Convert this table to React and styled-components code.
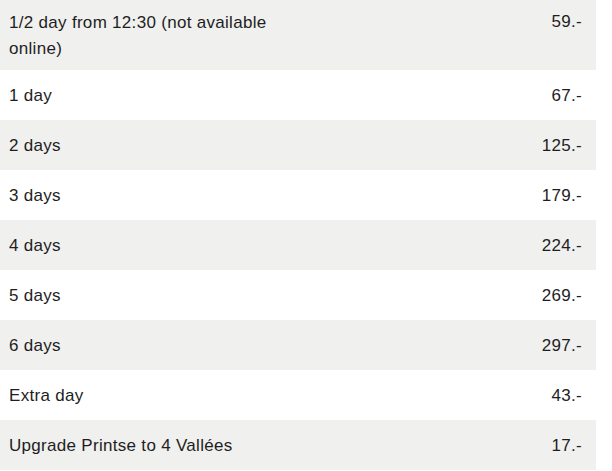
import React from "react";
import styled, { createGlobalStyle } from "styled-components";

const GlobalStyle = createGlobalStyle`
  body {
    margin: 0;
    background: #ffffff;
    font-family: "Liberation Sans", Arial, sans-serif;
    color: #1e1e1e;
  }
`;

const Table = styled.table`
  width: 596px;
  border-collapse: collapse;
  font-size: 17px;
  line-height: 26px;
  letter-spacing: 0.3px;
`;

const Row = styled.tr`
  background: ${(p) => (p.$shaded ? "#f0f0ef" : "#ffffff")};
`;

const Label = styled.td`
  width: 50%;
  height: 50px;
  padding: 10px 0 8px 9px;
  text-align: left;
  vertical-align: middle;
  box-sizing: border-box;
`;

const Price = styled.td`
  height: 50px;
  padding: 9px 14px 9px 0;
  text-align: right;
  vertical-align: top;
  box-sizing: border-box;
  padding-top: ${(p) => (p.$tall ? "9px" : "13px")};
`;

const prices = [
  { label: "1/2 day from 12:30 (not available online)", price: "59.-" },
  { label: "1 day", price: "67.-" },
  { label: "2 days", price: "125.-" },
  { label: "3 days", price: "179.-" },
  { label: "4 days", price: "224.-" },
  { label: "5 days", price: "269.-" },
  { label: "6 days", price: "297.-" },
  { label: "Extra day", price: "43.-" },
  { label: "Upgrade Printse to 4 Vallées", price: "17.-" },
];

function App() {
  return (
    <>
      <GlobalStyle />
      <Table>
        <tbody>
          {prices.map((item, i) => (
            <Row key={item.label} $shaded={i % 2 === 0}>
              <Label>{item.label}</Label>
              <Price $tall={i === 0}>{item.price}</Price>
            </Row>
          ))}
        </tbody>
      </Table>
    </>
  );
}

export default App;
